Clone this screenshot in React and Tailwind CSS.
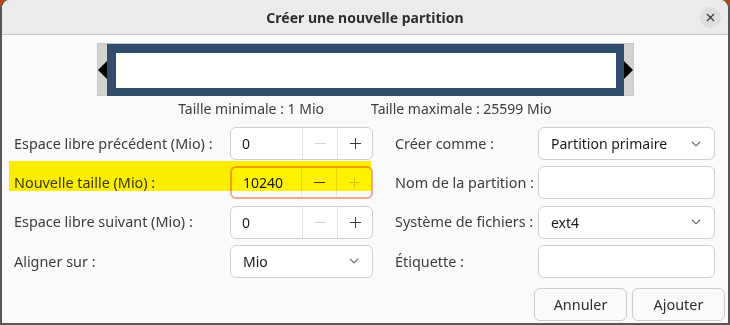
import React from 'react';

const font = { fontFamily: '"Noto Sans", "Open Sans", sans-serif' };

const Minus = ({ off }) => (
  <svg width="11" height="11" viewBox="0 0 11 11">
    <line x1="0" y1="5.5" x2="11" y2="5.5" stroke={off ? '#d2d2d2' : '#3a3a3a'} strokeWidth="1" />
  </svg>
);

const Plus = ({ off }) => (
  <svg width="11" height="11" viewBox="0 0 11 11">
    <line x1="0" y1="5.5" x2="11" y2="5.5" stroke={off ? '#d2d2d2' : '#3a3a3a'} strokeWidth="1" />
    <line x1="5.5" y1="0" x2="5.5" y2="11" stroke={off ? '#d2d2d2' : '#3a3a3a'} strokeWidth="1" />
  </svg>
);

const Chevron = () => (
  <svg width="10" height="6" viewBox="0 0 10 6">
    <polyline points="1,0.8 5,4.8 9,0.8" fill="none" stroke="#555" strokeWidth="1.1" />
  </svg>
);

const Spin = ({ value, minusOff, plusOff, focused }) => (
  <div
    className={`flex h-[33px] w-[143px] bg-white rounded-[6px] ${
      focused ? 'border-2 border-[#f2a68e]' : 'border border-[#cfcfcf]'
    }`}
  >
    <div className="flex-1 flex items-center pl-[11px] text-[14px] text-[#1a1a1a]">{value}</div>
    <div className="w-[35px] flex items-center justify-center border-l border-[#e4e4e4]">
      <Minus off={minusOff} />
    </div>
    <div className="w-[35px] flex items-center justify-center border-l border-[#e4e4e4]">
      <Plus off={plusOff} />
    </div>
  </div>
);

const Combo = ({ value, w }) => (
  <div className={`flex items-center justify-between h-[33px] ${w} bg-white border border-[#cfcfcf] rounded-[6px] pl-[12px] pr-[13px] text-[14px] text-[#1a1a1a]`}>
    <span>{value}</span>
    <Chevron />
  </div>
);

const Entry = () => (
  <div className="h-[33px] w-[177px] bg-white border border-[#cfcfcf] rounded-[6px]" />
);

const Row = ({ label, lw, children, className = '' }) => (
  <div className={`flex items-center h-[33px] ${className}`}>
    <div className={`${lw} text-[14.4px] text-[#3c3c3c] whitespace-nowrap`}>{label}</div>
    {children}
  </div>
);

export default function App() {
  return (
    <div className="w-[730px] h-[325px] bg-[#b2461c] overflow-hidden" style={font}>
      <div className="h-full flex flex-col bg-[#fafafa] rounded-t-[9px] border-x-2 border-b-2 border-[#565656] overflow-hidden">
        {/* title bar */}
        <div className="h-[35px] shrink-0 grid grid-cols-[1fr_auto_1fr] items-center bg-[#ebebeb] border-b border-[#c3c3c3]">
          <div />
          <div className="text-[14px] font-bold text-[#2e2e2e]">Créer une nouvelle partition</div>
          <div className="flex justify-end pr-[7px]">
            <div className="w-[21px] h-[21px] rounded-full bg-[#dedede] flex items-center justify-center">
              <svg width="9" height="9" viewBox="0 0 9 9">
                <path d="M1 1 L8 8 M8 1 L1 8" stroke="#3a3a3a" strokeWidth="1.3" />
              </svg>
            </div>
          </div>
        </div>

        {/* partition bar */}
        <div className="flex justify-center mt-[8px]">
          <div className="w-[537px] h-[53px] flex items-center bg-[#d3d3d3] border border-[#c9c9c9]">
            <div className="w-[9px] flex justify-start">
              <svg width="9" height="18" viewBox="0 0 9 18">
                <polygon points="9,0 0,9 9,18" fill="#000" />
              </svg>
            </div>
            <div className="w-[517px] h-[52px] self-start border-[9px] border-b-[8px] border-r-[8px] border-[#304e6c] bg-white" />
            <div className="w-[9px] flex justify-end">
              <svg width="9" height="18" viewBox="0 0 9 18">
                <polygon points="0,0 9,9 0,18" fill="#000" />
              </svg>
            </div>
          </div>
        </div>

        <div className="flex justify-center gap-[47px] mt-[2px] h-[20px] items-center text-[14px] text-[#3c3c3c]">
          <span>Taille minimale : 1 Mio</span>
          <span>Taille maximale : 25599 Mio</span>
        </div>

        {/* form */}
        <div className="flex mt-[9px] pl-[12px]">
          <div className="flex flex-col gap-[6.3px]">
            <Row label="Espace libre précédent (Mio) :" lw="w-[216px]">
              <Spin value="0" minusOff />
            </Row>
            <Row label="Nouvelle taille (Mio) :" lw="w-[216px]" className="relative">
              <Spin value="10240" plusOff focused />
              <div className="absolute left-[-5px] top-[-5px] w-[362px] h-[30px] bg-[#fff200] mix-blend-multiply pointer-events-none" />
            </Row>
            <Row label="Espace libre suivant (Mio) :" lw="w-[216px]">
              <Spin value="0" minusOff />
            </Row>
            <Row label="Aligner sur :" lw="w-[216px]">
              <Combo value="Mio" w="w-[143px]" />
            </Row>
          </div>
          <div className="flex flex-col gap-[6.3px] ml-[22px]">
            <Row label="Créer comme :" lw="w-[143px]">
              <Combo value="Partition primaire" w="w-[177px]" />
            </Row>
            <Row label="Nom de la partition :" lw="w-[143px]">
              <Entry />
            </Row>
            <Row label="Système de fichiers :" lw="w-[143px]">
              <Combo value="ext4" w="w-[177px]" />
            </Row>
            <Row label="Étiquette :" lw="w-[143px]">
              <Entry />
            </Row>
          </div>
        </div>

        <div className="flex justify-end gap-[5px] pr-[3px] mt-[10px]">
          <button className="w-[93px] h-[33px] rounded-[6px] border border-[#cdcdcd] bg-[#fafafa] text-[14.4px] text-[#2e2e2e]">Annuler</button>
          <button className="w-[93px] h-[33px] rounded-[6px] border border-[#cdcdcd] bg-[#fafafa] text-[14.4px] text-[#2e2e2e]">Ajouter</button>
        </div>
      </div>
    </div>
  );
}
